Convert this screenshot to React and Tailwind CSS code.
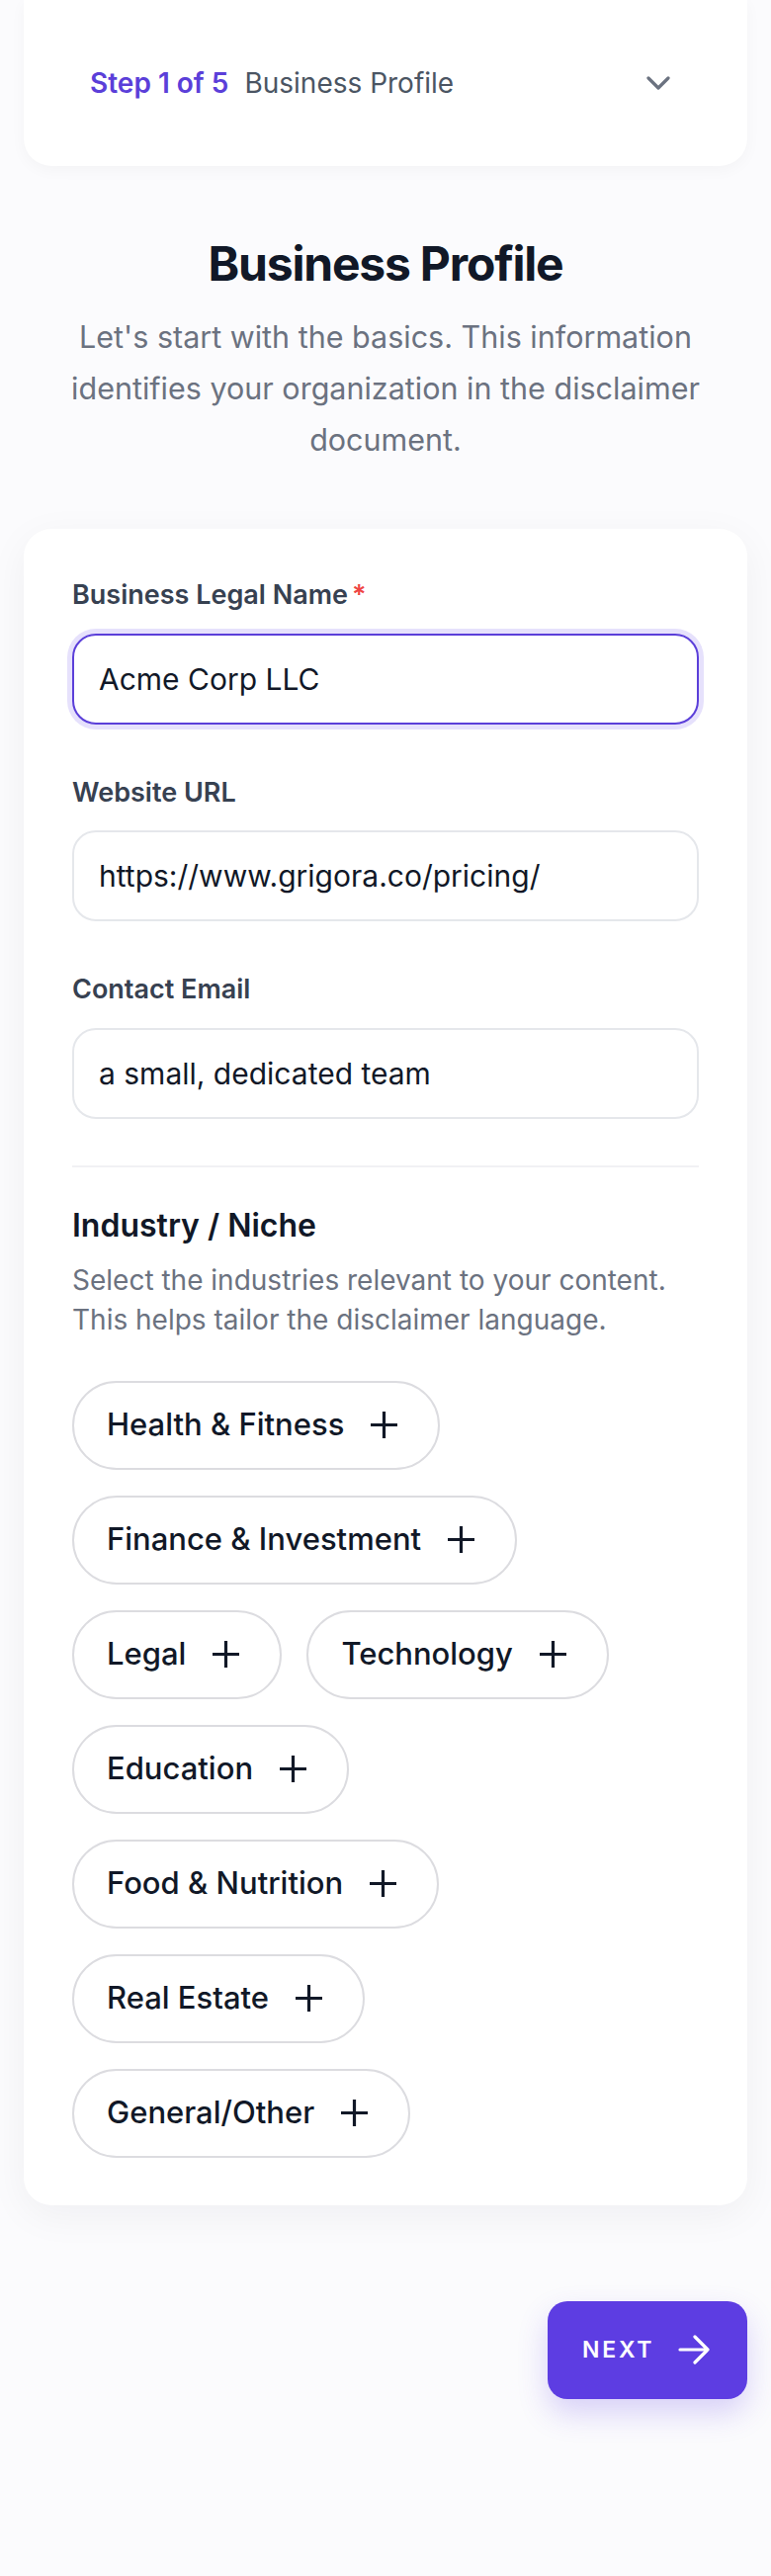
import React, { useState } from 'react';

const industries = [
  'Health & Fitness',
  'Finance & Investment',
  'Legal',
  'Technology',
  'Education',
  'Food & Nutrition',
  'Real Estate',
  'General/Other',
];

const PlusIcon = () => (
  <svg width="29" height="29" viewBox="0 0 29 29" fill="none" stroke="currentColor" strokeWidth="3.2" strokeLinecap="butt">
    <path d="M14.5 1v27M1 14.5h27" />
  </svg>
);

const Field = ({ label, required, value, focused }) => (
  <div>
    <label className="mb-5 block text-[27px] font-semibold leading-[37.5px] text-[#374151]">
      {label}
      {required && <span className="ml-1 text-[#ef4444]">*</span>}
    </label>
    <input
      type="text"
      defaultValue={value}
      className={
        focused
          ? 'block h-[92px] w-full rounded-[24px] border-2 border-[#5b3fd9] bg-white px-[25px] text-[30px] text-[#111827] shadow-[0_0_0_5px_#e6e1fc] outline-none'
          : 'block h-[92px] w-full rounded-[24px] border-2 border-[#e5e7eb] bg-white px-[25px] text-[30px] text-[#111827] outline-none'
      }
    />
  </div>
);

const App = () => {
  const [selected, setSelected] = useState([]);

  const toggle = (name) => {
    setSelected((prev) => (prev.includes(name) ? prev.filter((n) => n !== name) : [...prev, name]));
  };

  return (
    <div className="min-h-[2606px] bg-[#fbfbfd] font-['Inter',sans-serif]">
      {/* step header */}
      <div className="mx-6 flex h-[168px] items-center justify-between rounded-b-[28px] bg-white pl-[67px] pr-[78px] shadow-[0_4px_16px_rgba(17,24,39,0.035)]">
        <div className="flex items-center gap-4 text-[28px]">
          <span className="font-semibold text-[#5b3fd9]">Step 1 of 5</span>
          <span className="text-[#4b5563]">Business Profile</span>
        </div>
        <svg width="24" height="14" viewBox="0 0 24 14" fill="none" stroke="#6b7280" strokeWidth="3.2" strokeLinecap="round" strokeLinejoin="round">
          <path d="M2 2l10 10 10-10" />
        </svg>
      </div>

      <div className="mt-[71px] text-center">
        <h1 className="text-[48px] font-bold leading-[56px] tracking-tight text-[#111827]">Business Profile</h1>
        <p className="mx-auto mt-5 max-w-[680px] px-[10px] text-[30.5px] leading-[52px] text-[#6b7280]">
          Let's start with the basics. This information identifies your organization in the disclaimer document.
        </p>
      </div>

      {/* form card */}
      <div className="mx-6 mt-16 rounded-[28px] bg-white px-[49px] pb-12 pt-12 shadow-[0_10px_40px_rgba(17,24,39,0.05)]">
        <div className="flex flex-col gap-[50px]">
          <Field label="Business Legal Name" required value="Acme Corp LLC" focused />
          <Field label="Website URL" value="https://www.grigora.co/pricing/" />
          <Field label="Contact Email" value="a small, dedicated team" />
        </div>

        <div className="mb-[37px] mt-[47px] h-[2px] bg-[#f1f1f4]" />

        <h2 className="text-[32px] font-semibold leading-[43px] text-[#111827]">Industry / Niche</h2>
        <p className="mt-[14px] text-[28px] leading-[40px] text-[#6b7280]">
          Select the industries relevant to your content.
          <br />
          This helps tailor the disclaimer language.
        </p>

        <div className="mt-[42px] flex flex-wrap gap-x-[25px] gap-y-[26px]">
          {industries.map((name) => (
            <button
              key={name}
              type="button"
              onClick={() => toggle(name)}
              className={
                selected.includes(name)
                  ? 'flex h-[90px] items-center gap-[26px] rounded-full border-2 border-[#5b3fd9] bg-[#f1edff] pl-[33px] pr-[40px] text-[31px] font-medium text-[#5b3fd9]'
                  : 'flex h-[90px] items-center gap-[26px] rounded-full border-2 border-[#dcdce0] bg-white pl-[33px] pr-[40px] text-[31px] font-medium text-[#111827]'
              }
            >
              <span>{name}</span>
              <PlusIcon />
            </button>
          ))}
        </div>
      </div>

      <div className="mx-6 mt-[97px] flex justify-end">
        <button
          type="button"
          className="flex h-[99px] w-[202px] items-center rounded-[20px] bg-[#5d3de2] pl-[35px] text-[23px] font-semibold tracking-[0.12em] text-white shadow-[0_14px_30px_rgba(93,61,226,0.22)]"
        >
          NEXT
          <svg className="ml-[24px]" width="32" height="30" viewBox="0 0 32 30" fill="none" stroke="currentColor" strokeWidth="3.2" strokeLinecap="round" strokeLinejoin="round">
            <path d="M2 15h28M17 2l13 13-13 13" />
          </svg>
        </button>
      </div>
    </div>
  );
};

export default App;
